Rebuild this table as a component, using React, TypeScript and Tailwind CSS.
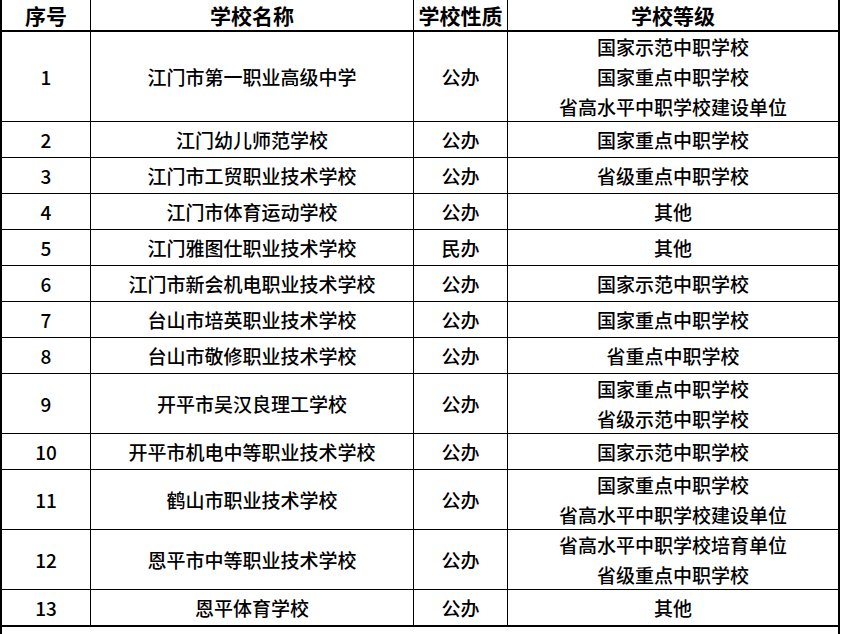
const rows: { no: string; name: string; type: string; levels: string[]; h: string }[] = [
  { no: "1", name: "江门市第一职业高级中学", type: "公办", levels: ["国家示范中职学校", "国家重点中职学校", "省高水平中职学校建设单位"], h: "h-[90px]" },
  { no: "2", name: "江门幼儿师范学校", type: "公办", levels: ["国家重点中职学校"], h: "h-[36px]" },
  { no: "3", name: "江门市工贸职业技术学校", type: "公办", levels: ["省级重点中职学校"], h: "h-[36px]" },
  { no: "4", name: "江门市体育运动学校", type: "公办", levels: ["其他"], h: "h-[36px]" },
  { no: "5", name: "江门雅图仕职业技术学校", type: "民办", levels: ["其他"], h: "h-[36px]" },
  { no: "6", name: "江门市新会机电职业技术学校", type: "公办", levels: ["国家示范中职学校"], h: "h-[36px]" },
  { no: "7", name: "台山市培英职业技术学校", type: "公办", levels: ["国家重点中职学校"], h: "h-[36px]" },
  { no: "8", name: "台山市敬修职业技术学校", type: "公办", levels: ["省重点中职学校"], h: "h-[36px]" },
  { no: "9", name: "开平市吴汉良理工学校", type: "公办", levels: ["国家重点中职学校", "省级示范中职学校"], h: "h-[60px]" },
  { no: "10", name: "开平市机电中等职业技术学校", type: "公办", levels: ["国家示范中职学校"], h: "h-[36px]" },
  { no: "11", name: "鹤山市职业技术学校", type: "公办", levels: ["国家重点中职学校", "省高水平中职学校建设单位"], h: "h-[60px]" },
  { no: "12", name: "恩平市中等职业技术学校", type: "公办", levels: ["省高水平中职学校培育单位", "省级重点中职学校"], h: "h-[60px]" },
  { no: "13", name: "恩平体育学校", type: "公办", levels: ["其他"], h: "h-[36px]" },
];

const cell = "flex flex-col items-center justify-center border-r border-b border-black text-center";

export default function App() {
  return (
    <div className="h-[634px] w-[841px] overflow-hidden bg-white font-['Noto_Sans_CJK_SC','Noto_Sans',sans-serif] text-black">
      <div className="grid w-[840px] grid-cols-[89px_323px_94px_332px] border-l-2 border-black">
        {/* Header */}
        {["序号", "学校名称", "学校性质", "学校等级"].map((t, i) => (
          <div
            key={t}
            className={`${cell} h-[32px] border-b-2 text-[21px] leading-none font-bold ${i === 3 ? "border-r-2" : ""}`}
          >
            {t}
          </div>
        ))}

        {/* Body */}
        {rows.map((r, idx) => {
          const last = idx === rows.length - 1 ? "border-b-2 h-[37px]" : r.h;
          return (
            <div key={r.no} className="contents text-[19px] leading-[30px] font-medium">
              <div className={`${cell} ${last}`}>{r.no}</div>
              <div className={`${cell} ${last}`}>{r.name}</div>
              <div className={`${cell} ${last}`}>{r.type}</div>
              <div className={`${cell} ${last} border-r-2`}>
                {r.levels.map((l) => (
                  <div key={l}>{l}</div>
                ))}
              </div>
            </div>
          );
        })}

        {/* Next row, cut off */}
        <div className="col-span-4 h-[20px] border-r-2 border-black" />
      </div>
    </div>
  );
}
